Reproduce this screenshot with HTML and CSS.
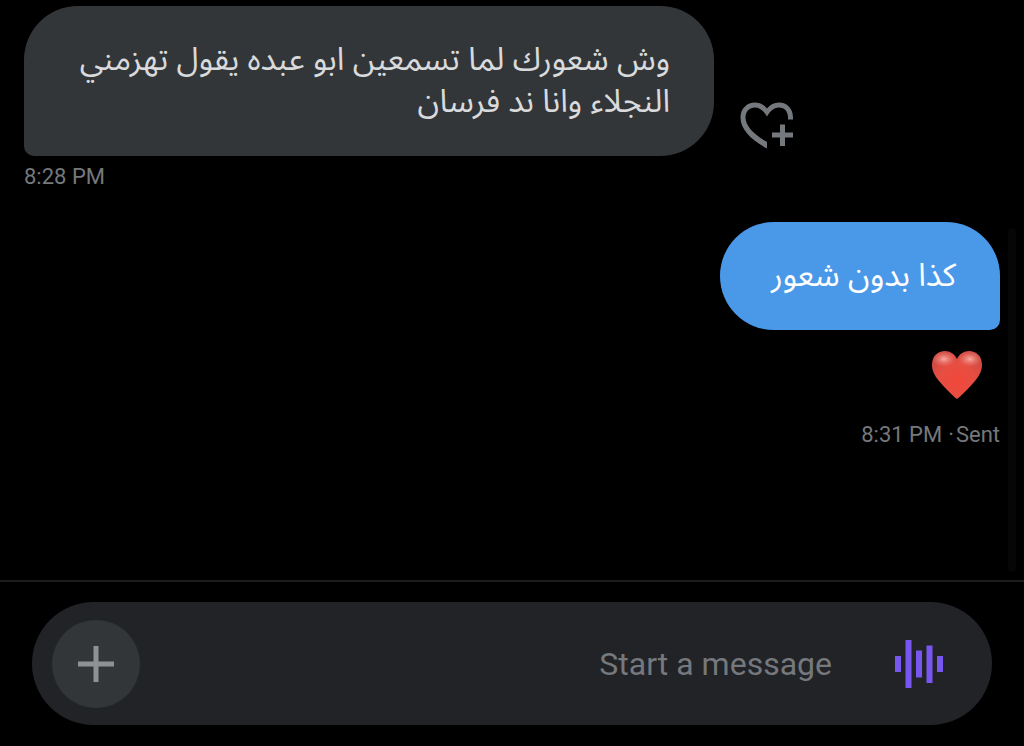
FILE: index.html
```html
<!DOCTYPE html>
<html lang="en">
<head>
  <meta charset="UTF-8">
  <meta name="viewport" content="width=device-width, initial-scale=1.0">
  <title>Messages</title>
  <link rel="stylesheet" href="styles.css">
</head>

<body>
<div class="chat">
    <main class="messages">
        <!-- Received message -->
        <div class="row">
            <p class="bubble received" lang="ar" dir="rtl">وش شعورك لما تسمعين ابو عبده يقول تهزمني النجلاء وانا ند فرسان</p>
            <button type="button" class="react" aria-label="Add reaction">
                <svg width="54" height="48" viewBox="0 0 54 48">
                    <path d="M27 46.500V40C14 32.500 5.500 24 5.500 15.500C5.500 9.500 9.500 5.500 15 5.500C19.500 5.500 23.500 8.500 27 14.500C30.500 8.500 34.500 5.500 39 5.500C44.500 5.500 48 9.500 48 15.500V17.500H53V15.500C53 6.500 47 0.500 39 0.500C34 0.500 30 2.500 27 6.500C24 2.500 20 0.500 15 0.500C7 0.500 0.500 6.500 0.500 15.500C0.500 28 12 38.500 27 46.500Z" fill="#75787c"/>
                    <path d="M40 22.500h5v8h8v5h-8v8.500h-5v-8.500h-8v-5h8z" fill="#75787c"/>
                </svg>
            </button>
        </div>
        <time class="time">8:28 PM</time>

        <!-- Sent messages -->
        <div class="row sent-row">
            <p class="bubble sent" lang="ar" dir="rtl">كذا بدون شعور</p>
        </div>
        <svg class="heart" width="50" height="50" viewBox="0 0 50 50" role="img" aria-label="Red heart">
            <defs>
                <radialGradient id="heartFill" cx="25" cy="31" r="30" gradientUnits="userSpaceOnUse">
                    <stop offset="0" stop-color="#f0483a"/>
                    <stop offset="0.6" stop-color="#e64e42"/>
                    <stop offset="1" stop-color="#cf4a42"/>
                </radialGradient>
                <radialGradient id="heartShine">
                    <stop offset="0" stop-color="#ffc4ba" stop-opacity="0.8"/>
                    <stop offset="1" stop-color="#f58078" stop-opacity="0"/>
                </radialGradient>
            </defs>
            <path d="M25 49C22 47 14 39 7 31C2 25 0 20 0 15C0 6 6 1 13 1C18 1 23 4 25 9C27 4 32 1 37 1C44 1 50 6 50 15C50 20 48 25 43 31C36 39 28 47 25 49Z" fill="url(#heartFill)"/>
            <ellipse cx="12" cy="9" rx="12" ry="8" fill="url(#heartShine)"/>
            <ellipse cx="38" cy="9" rx="12" ry="8" fill="url(#heartShine)"/>
        </svg>
        <div class="time status"><time>8:31 PM</time><span class="dot">·</span><span>Sent</span></div>
        <div class="scrollbar"></div>
    </main>

    <form class="composer">
        <div class="composer-box">
            <button type="button" class="add" aria-label="Add attachment">
                <svg width="36" height="36" viewBox="0 0 36 36">
                    <path d="M18 0v36M0 18h36" stroke="#8f9194" stroke-width="5"/>
                </svg>
            </button>
            <input type="text" class="inputbox" name="message" placeholder="Start a message" aria-label="Start a message">
            <button type="button" class="voice" aria-label="Record voice message">
                <svg width="48" height="48" viewBox="0 0 48 48" fill="#7857f0">
                    <path d="M0 16h6v16h-6zM10.500 0h6v48h-6zM21 10.500h6v27h-6zM31.500 5.500h6v37.500h-6zM42 16h6v16h-6z"/>
                </svg>
            </button>
        </div>
    </form>
</div>
</body>
</html>
```
FILE: styles.css
```css
* {
    box-sizing: border-box;
}

body {
    margin: 0;
    background: #000;
    font-family: Roboto, "Noto Sans", sans-serif;
    color: #75787c;
}

p {
    margin: 0;
}

button {
    border: none;
    padding: 0;
    background: none;
    cursor: pointer;
}

svg {
    display: block;
}

.chat {
    min-height: 100vh;
    display: flex;
    flex-direction: column;
}

/* Messages */
.messages {
    position: relative;
    flex: 1;
    display: flex;
    flex-direction: column;
    align-items: flex-start;
    padding: 6px 24px;
}

.row {
    display: flex;
    align-items: flex-end;
    gap: 26px;
}

.bubble {
    padding: 33px 44px;
    border-radius: 54px;
    font-family: "Noto Sans Arabic", "Noto Sans", "DejaVu Sans", sans-serif;
    font-size: 32px;
    line-height: 42px;
}

.received {
    max-width: 690px;
    background: #333639;
    color: #d9dadc;
    border-bottom-left-radius: 10px;
}

.sent {
    min-width: 280px;
    background: #4a99e9;
    color: #fff;
    border-bottom-right-radius: 10px;
}

.react {
    margin-bottom: 6px;
}

.time {
    margin-top: 8px;
    font-size: 22px;
    line-height: 26px;
}

.sent-row,
.heart,
.status {
    align-self: flex-end;
}

.sent-row {
    margin-top: 32px;
}

.heart {
    margin: 20px 18px 0 0;
}

.status {
    margin-top: 22px;
}

.dot {
    margin: 0 2px 0 6px;
}

.scrollbar {
    position: absolute;
    top: 228px;
    right: 8px;
    bottom: 8px;
    width: 8px;
    border-radius: 4px;
    background: #060606;
}

/* Message box */
.composer {
    padding: 20px 32px 21px;
    border-top: 2px solid #1b1c1e;
}

.composer-box {
    display: flex;
    align-items: center;
    height: 123px;
    padding: 0 49px 0 20px;
    border-radius: 62px;
    background: #212327;
}

.add {
    display: flex;
    align-items: center;
    justify-content: center;
    width: 88px;
    height: 88px;
    border-radius: 50%;
    background: #333639;
}

.inputbox {
    flex: 1;
    min-width: 0;
    margin: 0 63px 0 20px;
    padding: 0;
    border: none;
    outline: none;
    background: none;
    color: #d9dadc;
    font-family: inherit;
    font-size: 32px;
    line-height: 40px;
    text-align: right;
}

.inputbox::placeholder {
    color: #75787c;
    opacity: 1;
}
```
